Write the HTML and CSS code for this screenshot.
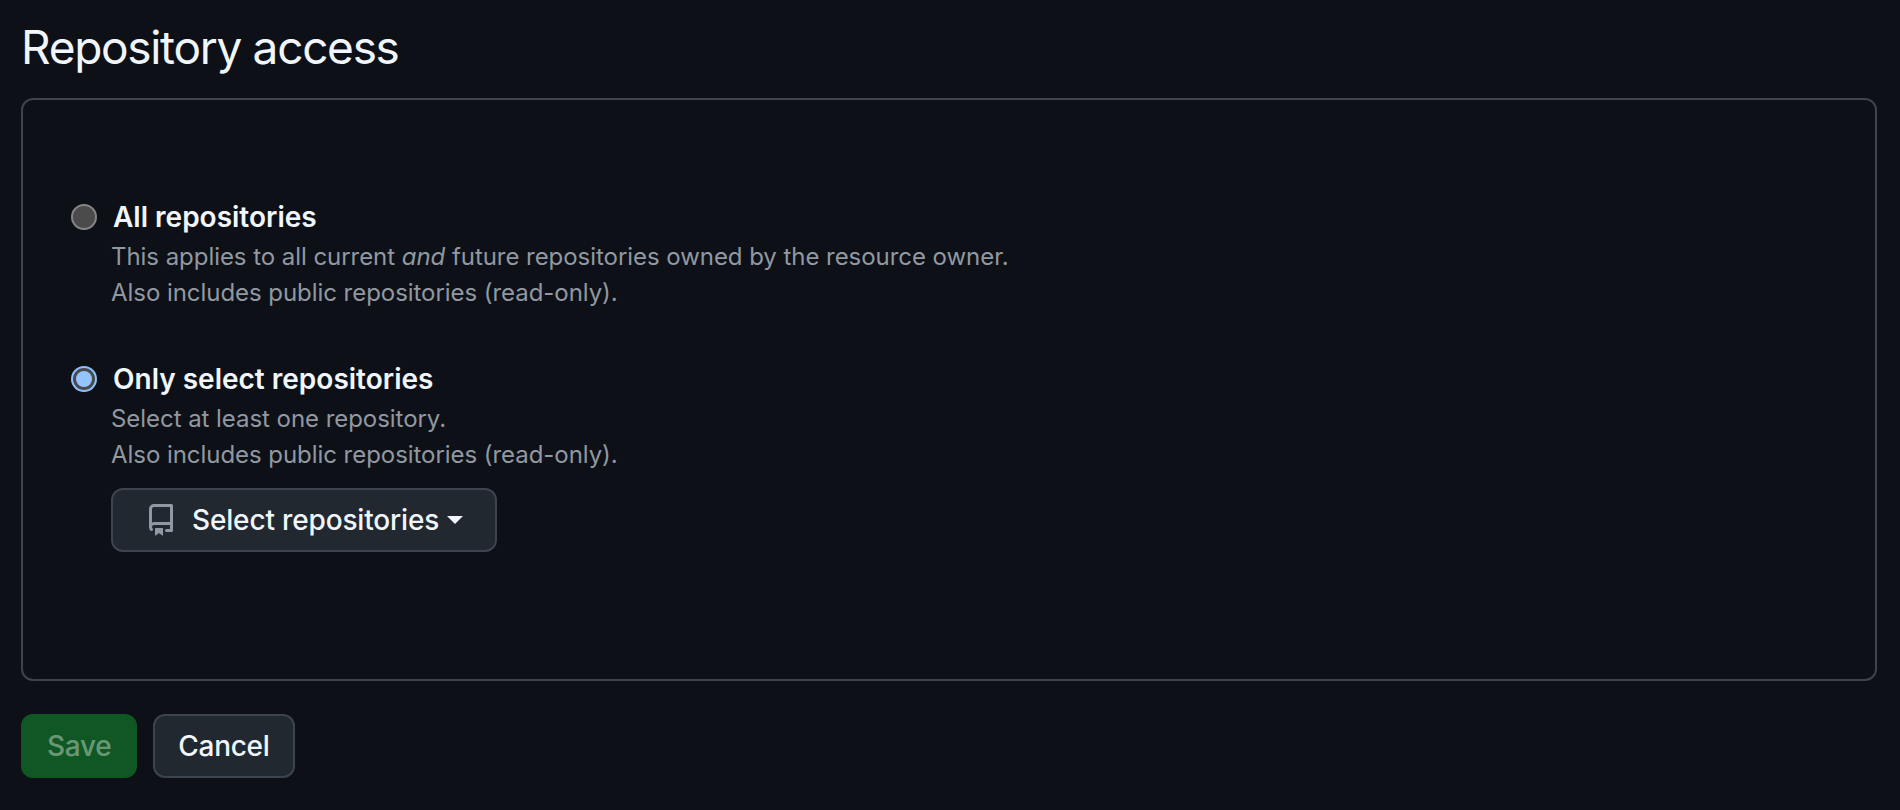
FILE: index.html
```html
<!DOCTYPE html>
<html lang="en">

<head>
    <meta charset="UTF-8" />
    <meta name="viewport" content="width=device-width, initial-scale=1.0" />
    <title>Repository access</title>
    <link rel="stylesheet" href="styles.css">
</head>

<body>
    <form class="page">
        <h2 class="page-title">Repository access</h2>
        <div class="box">
            <div class="option">
                <label class="option-label">
                    <input type="radio" name="access" /> All repositories
                </label>
                <p class="note">This applies to all current <em>and</em> future repositories owned by the resource owner.</p>
                <p class="note">Also includes public repositories (read-only).</p>
            </div>
            <div class="option">
                <label class="option-label">
                    <input type="radio" name="access" checked /> Only select repositories
                </label>
                <p class="note">Select at least one repository.</p>
                <p class="note">Also includes public repositories (read-only).</p>
                <button type="button" class="btn btn-select">
                    <svg class="repo-icon" viewBox="0 0 16 16" width="32" height="32" fill="currentColor" aria-hidden="true">
                        <path d="M2 2.5A2.5 2.5 0 0 1 4.5 0h8.75a.75.75 0 0 1 .75.75v12.5a.75.75 0 0 1-.75.75h-2.5a.75.75 0 0 1 0-1.5h1.75v-2h-8a1 1 0 0 0-.714 1.7.75.75 0 1 1-1.072 1.05A2.495 2.495 0 0 1 2 11.5Zm10.5-1h-8a1 1 0 0 0-1 1v6.708A2.486 2.486 0 0 1 4.5 9h8ZM5 12.25a.25.25 0 0 1 .25-.25h3.5a.25.25 0 0 1 .25.25v3.25a.25.25 0 0 1-.4.2l-1.45-1.087a.249.249 0 0 0-.3 0L5.4 15.7a.25.25 0 0 1-.4-.2Z"></path>
                    </svg>
                    Select repositories
                    <span class="caret"></span>
                </button>
            </div>
        </div>
        <div class="actions">
            <button type="button" class="btn btn-save" disabled>Save</button>
            <button type="button" class="btn">Cancel</button>
        </div>
    </form>
</body>

</html>
```

FILE: styles.css
```css
body {
    font-family: Inter, "Liberation Sans", sans-serif;
    background-color: #0d1117;
    color: #f0f6fc;
    margin: 0;
}

.page {
    padding: 20px 23px 0 21px;
}

.page-title {
    font-size: 46px;
    font-weight: 400;
    line-height: 54px;
    letter-spacing: -1.3px;
    margin: 0 0 24px;
}

.box {
    border: 2px solid #3d444d;
    border-radius: 12px;
    height: 583px;
    box-sizing: border-box;
    padding: 101px 47px 0;
}

.option {
    margin-bottom: 52px;
}

.option-label {
    display: flex;
    align-items: center;
    gap: 16px;
    font-size: 28px;
    font-weight: 600;
    line-height: 32px;
    margin-bottom: 6px;
}

.option-label input {
    appearance: none;
    box-sizing: border-box;
    width: 26px;
    height: 26px;
    margin: 0 0 0 1px;
    border: 2px solid #858585;
    border-radius: 50%;
    background-color: #4b4b4b;
}

.option-label input:checked {
    width: 22px;
    height: 22px;
    margin: 0 2px 0 3px;
    border: 3px solid #484a4e;
    background-color: #95c5ff;
    box-shadow: 0 0 0 2px #8fc1fb;
}

.note {
    color: #9198a1;
    font-size: 24px;
    line-height: 36px;
    letter-spacing: -0.05px;
    margin: 0 0 0 41px;
}

.btn {
    font-family: inherit;
    font-size: 28px;
    font-weight: 500;
    letter-spacing: -0.3px;
    color: #f0f6fc;
    background-color: #212830;
    border: 2px solid #3d444d;
    border-radius: 12px;
    height: 64px;
    padding: 0 23px;
}

.btn-select {
    display: flex;
    align-items: center;
    margin: 15px 0 0 41px;
    padding: 0 32px;
    letter-spacing: -0.16px;
}

.repo-icon {
    color: #9198a1;
    margin-right: 15px;
}

.caret {
    width: 0;
    height: 0;
    margin-left: 8px;
    border-top: 8px solid #f0f6fc;
    border-left: 8px solid transparent;
    border-right: 8px solid transparent;
}

.actions {
    display: flex;
    gap: 16px;
    margin-top: 33px;
}

.btn-save {
    padding: 0 24px;
    background-color: #105823;
    border-color: #105823;
    color: rgba(255, 255, 255, 0.4);
}
```
